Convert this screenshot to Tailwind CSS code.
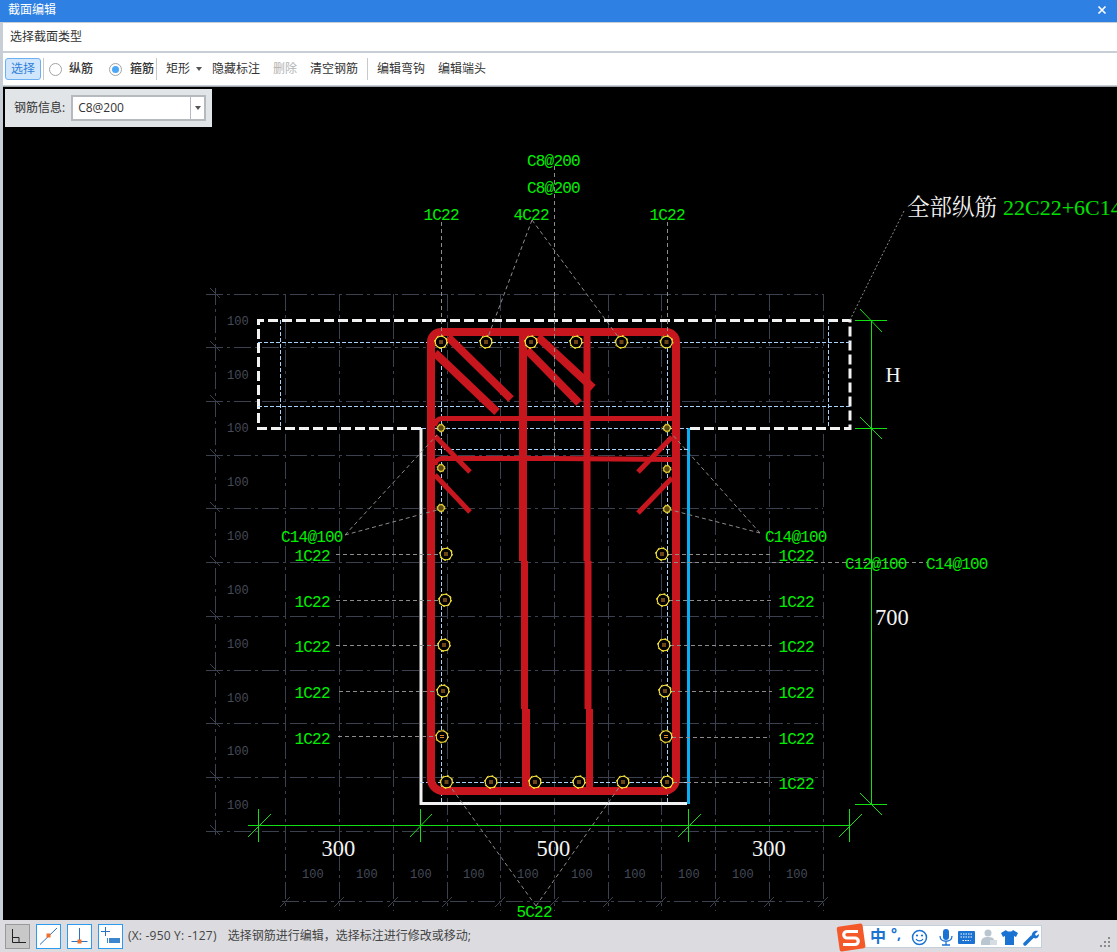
<!DOCTYPE html>
<html>
  <head>
    <meta charset="utf-8">
    <title>截面编辑</title>
    <script src="https://cdn.jsdelivr.net/npm/@tailwindcss/browser@4"></script>
  </head>
  <body class="bg-black">
    <div class="flex flex-col w-[1117px] h-[952px] overflow-hidden bg-[#c8ced6] text-[12px] leading-none text-[#333] font-['Open_Sans','Noto_Sans_CJK_SC',sans-serif]">

      <!-- title bar -->
      <div class="flex items-center justify-between h-[22px] shrink-0 pl-2 pr-[9px] pb-[2px] bg-[#2e80e2] text-white">
        <span>截面编辑</span>
        <svg class="w-3 h-3" viewBox="0 0 12 12"><path d="M2.5 2.5l7 7M9.5 2.5l-7 7" stroke="#fff" stroke-width="1.6"/></svg>
      </div>

      <div class="flex flex-col flex-1 min-h-0 pl-[3px] pt-px">
        <!-- section type -->
        <div class="flex items-center h-[28px] shrink-0 pl-[7px] bg-white">选择截面类型</div>

        <!-- toolbar -->
        <div class="flex items-center h-[32px] mt-[2px] shrink-0 pl-[2px] bg-white">
          <button class="w-[36px] h-[22px] rounded-[3px] border border-[#6db0f2] bg-[#cfe6fc] text-[#2f80d8]">选择</button>
          <span class="w-px h-[22px] ml-[2px] bg-[#c9c9c9]"></span>
          <span class="w-[13px] h-[13px] ml-[5px] rounded-full border border-[#a3a3a3] bg-white"></span>
          <span class="ml-[7px] font-medium">纵筋</span>
          <span class="flex items-center justify-center w-[13px] h-[13px] ml-[16px] rounded-full border border-[#a3a3a3] bg-white"><span class="w-[7px] h-[7px] rounded-full bg-[#4ba6f5]"></span></span>
          <span class="ml-[8px] font-medium">箍筋</span>
          <span class="w-px h-[22px] ml-[2px] bg-[#c9c9c9]"></span>
          <span class="ml-[9px]">矩形</span>
          <svg class="w-[6px] h-[4px] ml-[6px]" viewBox="0 0 6 4"><path d="M0 0h6L3 4z" fill="#555"/></svg>
          <span class="ml-[10px]">隐藏标注</span>
          <span class="ml-[13px] text-[#b3b3b3]">删除</span>
          <span class="ml-[13px]">清空钢筋</span>
          <span class="w-px h-[22px] ml-[9px] bg-[#c9c9c9]"></span>
          <span class="ml-[9px]">编辑弯钩</span>
          <span class="ml-[13px]">编辑端头</span>
        </div>

        <!-- drawing canvas -->
        <div class="relative flex-1 min-h-0 mt-px border-t border-[#9aa0a6] bg-black overflow-hidden">
          <div class="absolute left-[2px] top-[2px] flex items-center w-[207px] h-[38px] pl-[9px] bg-[#e1e5e8]">
            <span>钢筋信息:</span>
            <div class="flex items-center w-[135px] h-[26px] ml-[6px] border-2 border-[#b6babe] bg-white">
              <span class="flex-1 pl-[5px]">C8@200</span>
              <span class="flex items-center justify-center w-[14px] h-full border-l border-[#b6babe]">
                <svg class="w-[6px] h-[4px]" viewBox="0 0 6 4"><path d="M0 0h6L3 4z" fill="#555"/></svg>
              </span>
            </div>
          </div>

          <svg class="block" width="1114" height="833" viewBox="3 87 1114 833" fill="none">
            <defs>
              <g id="bar">
                <circle r="5.8" fill="#000" stroke="#ffe93b" stroke-width="1.1"/>
                <circle r="6.5" stroke="#ffe93b" stroke-width="1" stroke-dasharray="1.6 3.5"/>
                <path d="M-2 -1h4M-2 1h4" stroke="#d98a2a" stroke-width="1"/>
              </g>
              <g id="small-bar">
                <circle r="3.4" fill="#5a4a12" stroke="#ffe93b" stroke-width="1"/>
                <circle r="4" stroke="#ffe93b" stroke-width="1" stroke-dasharray="1.4 1.8"/>
              </g>
            </defs>

            <!-- grid -->
            <g stroke="#3b414e" stroke-width="1" stroke-dasharray="17 4 3 4">
              <path d="M206 294.5H823M206 347.5H823M206 401.5H823M206 455.5H823M206 508.5H823M206 562.5H823M206 616.5H823M206 670.5H823M206 723.5H823M206 777.5H823M206 831.5H823"/>
              <path d="M282 901.5H823"/>
              <path d="M215.5 288V835M285.5 294V911M339.5 294V911M393.5 294V911M447.5 294V911M500.5 294V911M554.5 294V911M608.5 294V911M661.5 294V911M715.5 294V911M769.5 294V911M823.5 294V911"/>
            </g>
            <path stroke="#3b414e" d="M210 288l10 10M210 341l10 10M210 395l10 10M210 449l10 10M210 502l10 10M210 556l10 10M210 610l10 10M210 664l10 10M210 717l10 10M210 771l10 10M210 825l10 10M280 907l10 -10M334 907l10 -10M388 907l10 -10M442 907l10 -10M495 907l10 -10M549 907l10 -10M603 907l10 -10M656 907l10 -10M710 907l10 -10M764 907l10 -10M818 907l10 -10"/>
            <g fill="#454b59" font-family="Liberation Mono, monospace" font-size="12">
              <text x="227" y="325">100</text><text x="227" y="379">100</text><text x="227" y="432">100</text><text x="227" y="486">100</text><text x="227" y="540">100</text><text x="227" y="594">100</text><text x="227" y="648">100</text><text x="227" y="702">100</text><text x="227" y="755">100</text><text x="227" y="809">100</text>
              <text x="302" y="878">100</text><text x="356" y="878">100</text><text x="410" y="878">100</text><text x="463" y="878">100</text><text x="517" y="878">100</text><text x="571" y="878">100</text><text x="624" y="878">100</text><text x="678" y="878">100</text><text x="732" y="878">100</text><text x="786" y="878">100</text>
            </g>

            <!-- concrete outline -->
            <path d="M421 428.5H258.5V320.5H850V428.5H689" stroke="#f2f2f2" stroke-width="3" stroke-dasharray="10 4"/>
            <path d="M421 428V803.5H687" stroke="#f2f2f2" stroke-width="3"/>
            <path d="M688.5 428V804" stroke="#0aaef0" stroke-width="3"/>

            <!-- light blue reference lines -->
            <g stroke="#a9d2fb" stroke-width="1" stroke-dasharray="4 2">
              <path d="M258 342.5H850M258 406.5H850M422 428.5H688M432 449.5H688M420 782.5H688"/>
              <path d="M280.5 320V428M828.5 320V428M441.5 342V804M667.5 342V804"/>
            </g>

            <!-- stirrups -->
            <g stroke="#c8161f">
              <path d="M431 778V342a10 10 0 0 1 10 -10H666a10 10 0 0 1 10 10V779a12 12 0 0 1 -12 12H443a12 12 0 0 1 -12 -12Z" stroke-width="8"/>
              <path d="M523 336V561" stroke-width="8"/>
              <path d="M524.5 561V709" stroke-width="7"/>
              <path d="M526 709V790" stroke-width="8"/>
              <path d="M587 336V561" stroke-width="7"/>
              <path d="M588 561V709" stroke-width="7"/>
              <path d="M589.5 709V790" stroke-width="7"/>
              <path d="M435 426a7 7 0 0 1 7 -7.5H672" stroke-width="5"/>
              <path d="M435 465a7 7 0 0 1 7 -6.500H554L672 459.500" stroke-width="5"/>
              <path d="M448 337L511 399M435 353L497 412M538 337L593 388M527 350L579 403" stroke-width="8"/>
              <path d="M435 436L470 472M435 475L470 512M672 437L638 472M672 478L638 513" stroke-width="5"/>
            </g>

            <!-- leaders -->
            <g stroke="#8c8c8c" stroke-width="1" stroke-dasharray="4 3">
              <path d="M554.500 166V460M441.500 222V337M667.500 222V337"/>
              <path d="M532 220L488 337M532 220L619 338"/>
              <path d="M345 535L437 435M345 535L437 510M760 533L671 433M760 533L671 510"/>
              <path d="M336 554.500H440M336 600.500H439M336 645.500H438M339 691.500H437M338 736.500H436"/>
              <path d="M668 554.500H772M669 600.500H772M670 645.500H772M671 691.500H772M672 737.500H770M673 782.500H772"/>
              <path d="M660 562.500H927"/>
              <path d="M536 906L450 786M536 906L620 786"/>
            </g>
            <path d="M904 211L850 320" stroke="#8c8c8c" stroke-dasharray="2 2"/>

            <!-- rebars -->
            <use href="#bar" x="441" y="342"/><use href="#bar" x="486" y="342"/><use href="#bar" x="531" y="342"/><use href="#bar" x="576" y="342"/><use href="#bar" x="621.500" y="342"/><use href="#bar" x="666.500" y="342"/>
            <use href="#bar" x="446" y="554"/><use href="#bar" x="445" y="600"/><use href="#bar" x="444" y="645"/><use href="#bar" x="443" y="691"/><use href="#bar" x="442" y="736.500"/>
            <use href="#bar" x="662" y="554"/><use href="#bar" x="663" y="600"/><use href="#bar" x="664" y="645"/><use href="#bar" x="665" y="691"/><use href="#bar" x="666" y="736.500"/>
            <use href="#bar" x="446.500" y="782"/><use href="#bar" x="491" y="782"/><use href="#bar" x="535" y="782"/><use href="#bar" x="579" y="782"/><use href="#bar" x="623" y="782"/><use href="#bar" x="667" y="782"/>
            <use href="#small-bar" x="441" y="428"/><use href="#small-bar" x="441" y="468"/><use href="#small-bar" x="441" y="508"/>
            <use href="#small-bar" x="667" y="428"/><use href="#small-bar" x="667" y="469"/><use href="#small-bar" x="667" y="509"/>

            <!-- dimensions -->
            <g stroke="#13e013" stroke-width="1">
              <path d="M248 825.500H850M258.500 809V842M420.500 809V842M688.500 809V842M849.500 809V842"/>
              <path d="M248 837L271 814M410 837L432 814M678 837L701 814M839 837L862 814"/>
              <path d="M871.500 320V804M855 320.500H887M855 428.500H887M855 804.500H887"/>
              <path d="M860 309L882 332M860 417L882 439M860 793L882 815"/>
            </g>

            <g fill="#00f000" font-family="Liberation Mono, monospace" font-size="16" letter-spacing="-0.8">
              <text x="527" y="166">C8@200</text><text x="527" y="193">C8@200</text>
              <text x="423.500" y="220">1C22</text><text x="513.500" y="220">4C22</text><text x="649.500" y="220">1C22</text>
              <text x="281" y="542">C14@100</text><text x="765" y="542">C14@100</text>
              <text x="845" y="569">C12@100</text><text x="926" y="569">C14@100</text>
              <text x="294.500" y="561">1C22</text><text x="294.500" y="607">1C22</text><text x="294.500" y="652">1C22</text><text x="294.500" y="698">1C22</text><text x="294.500" y="744">1C22</text>
              <text x="778.500" y="561">1C22</text><text x="778.500" y="607">1C22</text><text x="778.500" y="652">1C22</text><text x="778.500" y="698">1C22</text><text x="778.500" y="744">1C22</text><text x="778.500" y="789">1C22</text>
              <text x="516.500" y="917">5C22</text>
            </g>
            <g fill="#f4f4f4" font-family="Liberation Serif, serif" font-size="22.500">
              <text x="321.500" y="856">300</text><text x="536.500" y="856">500</text><text x="752" y="856">300</text><text x="875" y="625">700</text><text x="885.500" y="382" font-size="21">H</text>
            </g>
            <text x="907" y="215" fill="#f4f4f4" font-size="22.500" font-family="Noto Serif CJK SC, Noto Sans CJK SC, sans-serif">全部纵筋</text>
            <text x="1003" y="215" fill="#00e000" font-size="22" font-family="Liberation Serif, serif">22C22+6C14</text>
          </svg>
        </div>

        <!-- status bar -->
        <div class="flex items-center h-[32px] shrink-0 -ml-[3px] pl-[5px] bg-[#dcdce0] text-[#444]">
          <span class="flex items-center justify-center w-[25px] h-[25px] border border-[#999] bg-[#c8c8c8]">
            <svg width="19" height="19" viewBox="0 0 19 19" fill="none"><path d="M4.500 2V15.500H18M4.500 10.500H11V15.500" stroke="#222"/></svg>
          </span>
          <span class="flex items-center justify-center w-[25px] h-[25px] ml-[6px] border border-[#2b9bf0] bg-white">
            <svg width="23" height="23" viewBox="0 0 23 23" fill="none"><path d="M3 19.500L20 3" stroke="#2a72c0"/><rect x="9.500" y="8.500" width="4" height="4" fill="#f0702a"/></svg>
          </span>
          <span class="flex items-center justify-center w-[25px] h-[25px] ml-[6px] border border-[#2b9bf0] bg-white">
            <svg width="23" height="23" viewBox="0 0 23 23" fill="none"><path d="M11.500 3V17M3.500 16.500H19.500" stroke="#2a72c0"/><rect x="9.500" y="14.500" width="4" height="4" fill="#f0702a"/></svg>
          </span>
          <span class="flex items-center justify-center w-[25px] h-[25px] ml-[6px] border border-[#2b9bf0] bg-white">
            <svg width="23" height="23" viewBox="0 0 23 23" fill="none"><path d="M6.500 2V11M2 6.500H11" stroke="#2a72c0"/><rect x="10" y="13" width="11" height="5" fill="#3d85cc"/><rect x="8" y="13" width="1" height="5" fill="#3d85cc"/></svg>
          </span>
          <span class="ml-[5px] tracking-[0.2px]">(X: -950 Y: -127)</span>
          <span class="ml-[11px]">选择钢筋进行编辑，选择标注进行修改或移动;</span>

          <!-- input method bar -->
          <div class="relative flex items-center w-[180px] h-[23px] ml-auto mr-[75px] pl-[30px] border border-[#c3d0dc] bg-white text-[#1a73d2]">
            <svg class="absolute -left-[27px] -top-[4px]" width="32" height="30" viewBox="0 0 32 30"><rect x="2" y="3" width="26" height="25" rx="2" transform="rotate(-8 15 15)" fill="#f4592a"/><path d="M22 9.500H11a3 3 0 0 0 0 6.500h8a3 3 0 0 1 0 6.500H7" stroke="#fff" stroke-width="3.200" fill="none"/></svg>
            <span class="absolute left-[7px] text-[16px] font-bold">中</span>
            <span class="absolute left-[28px] top-[1px] text-[14px] font-bold">°,</span>
            <svg class="absolute left-[48px] top-[3px]" width="17" height="17" viewBox="0 0 17 17" fill="none"><circle cx="8.500" cy="8.500" r="7" stroke="#1a73d2" stroke-width="1.500"/><path d="M5 10c1.500 2.500 5.500 2.500 7 0" stroke="#1a73d2" stroke-width="1.300"/><circle cx="6" cy="6.500" r="1.100" fill="#1a73d2"/><circle cx="11" cy="6.500" r="1.100" fill="#1a73d2"/></svg>
            <svg class="absolute left-[76px] top-[3px]" width="14" height="17" viewBox="0 0 14 17" fill="none"><rect x="4" y="0" width="6" height="11" rx="3" fill="#1a73d2"/><path d="M1 7c0 7 12 7 12 0M7 12v4M3 16h8" stroke="#1a73d2" stroke-width="1.300"/></svg>
            <svg class="absolute left-[95px] top-[5px]" width="17" height="13" viewBox="0 0 17 13"><rect width="17" height="13" rx="1" fill="#1a73d2"/><path d="M2.500 3h12M2.500 6h12M4.500 9.500h8" stroke="#fff" stroke-width="1.200" stroke-dasharray="1.500 1"/></svg>
            <svg class="absolute left-[118px] top-[3px]" width="16" height="17" viewBox="0 0 16 17"><circle cx="7" cy="4" r="3.500" fill="#b9c6d0"/><path d="M0 14c0-5 3-6 7-6s6 1 6 3H9v5H0z" fill="#b9c6d0"/><rect x="9" y="11" width="7" height="5" fill="#d5dde3"/></svg>
            <svg class="absolute left-[138px] top-[3px]" width="17" height="17" viewBox="0 0 17 17"><path d="M5 1L0 4l2 4 2-1v9h9V7l2 1 2-4-5-3c-1 2-6 2-7 0z" fill="#1a73d2"/></svg>
            <svg class="absolute left-[160px] top-[3px]" width="17" height="17" viewBox="0 0 17 17" fill="none"><path d="M2 15L9 8" stroke="#1a73d2" stroke-width="3.500" stroke-linecap="round"/><path d="M9 8c-1-4 2-7 6-6L12 5l1 2 3-2c0 4-3 6-7 3z" fill="#1a73d2"/></svg>
          </div>
          <svg class="absolute left-[1100px] top-[937px]" width="12" height="12" viewBox="0 0 12 12" fill="#8a8a8a"><rect x="8" y="0" width="2" height="2"/><rect x="4" y="4" width="2" height="2"/><rect x="8" y="4" width="2" height="2"/><rect x="0" y="8" width="2" height="2"/><rect x="4" y="8" width="2" height="2"/><rect x="8" y="8" width="2" height="2"/></svg>
        </div>
      </div>
    </div>
  </body>
</html>
